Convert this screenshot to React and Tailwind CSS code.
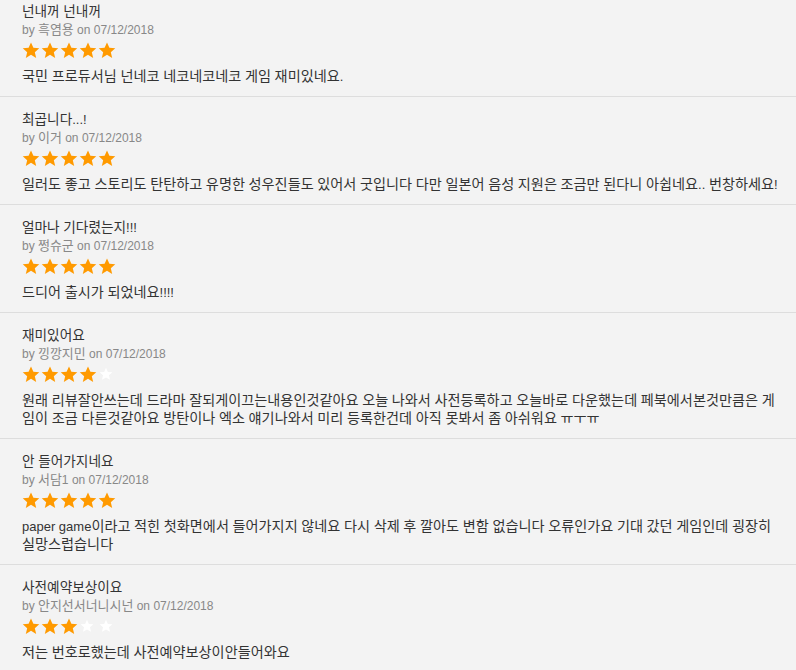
import React from 'react';

const reviews = [
  { title: '넌내꺼 넌내꺼', author: '흑염용', rating: 5, body: '국민 프로듀서님 넌네코 네코네코네코 게임 재미있네요.' },
  { title: '최곱니다...!', author: '이거', rating: 5, body: '일러도 좋고 스토리도 탄탄하고 유명한 성우진들도 있어서 굿입니다 다만 일본어 음성 지원은 조금만 된다니 아쉽네요.. 번창하세요!' },
  { title: '얼마나 기다렸는지!!!', author: '쩡슈군', rating: 5, body: '드디어 출시가 되었네요!!!!' },
  { title: '재미있어요', author: '낑깡지민', rating: 4, body: '원래 리뷰잘안쓰는데 드라마 잘되게이끄는내용인것같아요 오늘 나와서 사전등록하고 오늘바로 다운했는데 페북에서본것만큼은 게임이 조금 다른것같아요 방탄이나 엑소 얘기나와서 미리 등록한건데 아직 못봐서 좀 아쉬워요 ㅠㅜㅠ' },
  { title: '안 들어가지네요', author: '서담1', rating: 5, body: 'paper game이라고 적힌 첫화면에서 들어가지지 않네요 다시 삭제 후 깔아도 변함 없습니다 오류인가요 기대 갔던 게임인데 굉장히 실망스럽습니다' },
  { title: '사전예약보상이요', author: '안지선서너니시넌', rating: 3, body: '저는 번호로했는데 사전예약보상이안들어와요' },
];

const STAR = 'M12 1.2l3.2 7.2 7.8.7-5.9 5.1 1.8 7.7L12 17.8l-6.9 4.1 1.8-7.7L1 9.1l7.8-.7z';

// hangul glyphs run a bit wider in the reference, bump them up
const Ko = ({ text, size = 'text-[1.08em]' }) =>
  text.split(/([\uAC00-\uD7A3\u3131-\u318E]+)/).map((part, i) =>
    i % 2 === 1 ? (
      <span key={i} className={`${size} leading-none`}>{part}</span>
    ) : (
      part
    )
  );

const Stars = ({ rating }) => (
  <div className="flex items-center gap-px h-[20px] mt-px">
    {[1, 2, 3, 4, 5].map((i) => (
      <div key={i} className="w-[18px] h-[18px] flex items-center justify-center">
        {i <= rating ? (
          <svg viewBox="0 0 24 24" className="w-[19px] h-[19px]">
            <path d={STAR} fill="#ff9a00" />
          </svg>
        ) : (
          <svg viewBox="0 0 24 24" className="w-[14px] h-[14px] -ml-[2px]">
            <path d={STAR} fill="#ffffff" />
          </svg>
        )}
      </div>
    ))}
  </div>
);

const Review = ({ review }) => (
  <div className="pt-[14px] pb-[10px] pl-[22px] pr-[12px] border-b border-[#dddddd]">
    <p className="text-[13px] leading-[18px] text-[#333333]">
      <Ko text={review.title} size="text-[1.05em]" />
    </p>
    <p className="text-[12px] leading-[18px] text-[#888888]">
      by <Ko text={review.author} /> on 07/12/2018
    </p>
    <Stars rating={review.rating} />
    <p className="mt-[8px] text-[13px] leading-[18px] text-[#333333] break-all">
      <Ko text={review.body} size="text-[1.09em]" />
    </p>
  </div>
);

export default function App() {
  return (
    <div
      className="bg-[#f3f3f3] min-h-screen overflow-hidden"
      style={{ fontFamily: '"Liberation Sans", "Noto Sans CJK KR", sans-serif' }}
    >
      <div className="-mt-[11px]">
        {reviews.map((r, i) => (
          <Review key={i} review={r} />
        ))}
      </div>
    </div>
  );
}
